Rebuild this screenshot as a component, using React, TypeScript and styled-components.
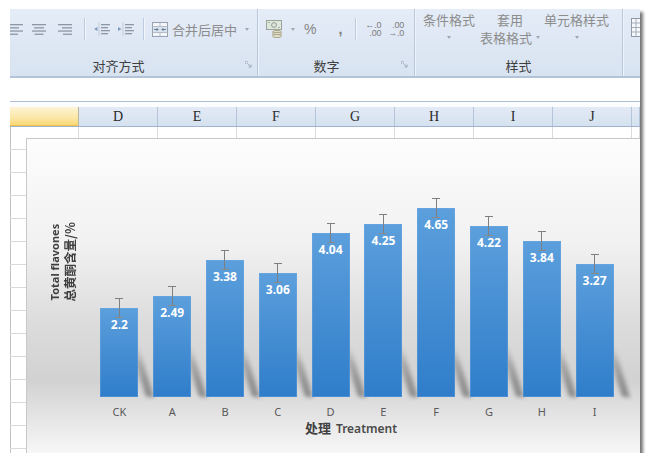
import React from 'react'
import styled, { createGlobalStyle } from 'styled-components'

const GlobalStyle = createGlobalStyle`
  html, body {
    margin: 0;
    padding: 0;
    background: #ffffff;
  }
  body {
    font-family: "Noto Sans", "Noto Sans CJK SC", sans-serif;
  }
`

const cjk = `"Noto Sans CJK SC", "Noto Sans", sans-serif`
const toolGray = '#8c8c8c'
const iconGray = '#8e97a4'

const treatments = [
  { name: 'CK', value: 2.2 },
  { name: 'A', value: 2.49 },
  { name: 'B', value: 3.38 },
  { name: 'C', value: 3.06 },
  { name: 'D', value: 4.04 },
  { name: 'E', value: 4.25 },
  { name: 'F', value: 4.65 },
  { name: 'G', value: 4.22 },
  { name: 'H', value: 3.84 },
  { name: 'I', value: 3.27 },
]

const PX_PER_UNIT = 40.6

const columns = [
  { key: 'C', width: 69, selected: true },
  { key: 'D', width: 79 },
  { key: 'E', width: 79 },
  { key: 'F', width: 79 },
  { key: 'G', width: 79 },
  { key: 'H', width: 79 },
  { key: 'I', width: 79 },
  { key: 'J', width: 79 },
  { key: 'K', width: 8, hidden: true },
]

const AlignIcon = ({ dir }: { dir: 'left' | 'center' | 'right' }) => {
  const rows = [14, 10, 14, 9]
  return (
    <svg width="14" height="13" viewBox="0 0 14 13">
      {rows.map((w, i) => {
        const x = dir === 'left' ? 0 : dir === 'right' ? 14 - w : (14 - w) / 2
        return <rect key={i} x={x} y={1 + i * 3.2} width={w} height={1.3} fill={iconGray} />
      })}
    </svg>
  )
}

const IndentIcon = ({ increase }: { increase?: boolean }) => (
  <svg width="16" height="14" viewBox="0 0 16 14">
    <line x1="5" y1="0.5" x2="5" y2="13.5" stroke="#a9b1bc" strokeWidth="1" strokeDasharray="1 1" />
    {increase ? (
      <path d="M0 5 L3.5 7 L0 9 Z" fill="#7f9bbf" />
    ) : (
      <path d="M3.5 5 L0 7 L3.5 9 Z" fill="#7f9bbf" />
    )}
    {[2, 5, 8, 11].map((y, i) => (
      <rect key={y} x="7" y={y} width={i % 2 ? 7 : 9} height="1.3" fill={iconGray} />
    ))}
  </svg>
)

const MergeIcon = () => (
  <svg width="16" height="15" viewBox="0 0 16 15">
    <rect x="0.5" y="0.5" width="15" height="14" fill="#f4f6f9" stroke="#98a2b0" />
    <line x1="0.5" y1="4.5" x2="15.5" y2="4.5" stroke="#b4bcc7" />
    <line x1="0.5" y1="10.5" x2="15.5" y2="10.5" stroke="#b4bcc7" />
    <rect x="1" y="5" width="14" height="5" fill="#dbe3ee" />
    <path d="M2 7.5 H6 M4.5 6 L6 7.5 L4.5 9" stroke="#6d7f99" fill="none" />
    <path d="M14 7.5 H10 M11.5 6 L10 7.5 L11.5 9" stroke="#6d7f99" fill="none" />
    <line x1="8" y1="1" x2="8" y2="4" stroke="#b4bcc7" />
    <line x1="8" y1="11" x2="8" y2="14" stroke="#b4bcc7" />
  </svg>
)

const AccountingIcon = () => (
  <svg width="19" height="18" viewBox="0 0 19 18">
    <rect x="0.5" y="0.5" width="15" height="9" fill="#dfe6dc" stroke="#9aa59a" />
    <circle cx="8" cy="5" r="2.4" fill="none" stroke="#8f9a8f" />
    <rect x="2" y="2" width="2" height="1" fill="#a5b0a5" />
    <rect x="12" y="7" width="2" height="1" fill="#a5b0a5" />
    <ellipse cx="11" cy="12" rx="4.5" ry="1.6" fill="#e4e0c8" stroke="#a9a48c" />
    <ellipse cx="11" cy="14" rx="4.5" ry="1.6" fill="#e4e0c8" stroke="#a9a48c" />
    <ellipse cx="11" cy="16" rx="4.5" ry="1.6" fill="#e4e0c8" stroke="#a9a48c" />
  </svg>
)

const TableIcon = () => (
  <svg width="10" height="19" viewBox="0 0 10 19">
    <rect x="0.5" y="0.5" width="12" height="18" fill="#f6f8fb" stroke="#8e98a6" />
    <line x1="0.5" y1="5" x2="10" y2="5" stroke="#a3adba" />
    <line x1="0.5" y1="9.5" x2="10" y2="9.5" stroke="#a3adba" />
    <line x1="0.5" y1="14" x2="10" y2="14" stroke="#a3adba" />
    <line x1="5" y1="0.5" x2="5" y2="18.5" stroke="#a3adba" />
  </svg>
)

const LauncherIcon = () => (
  <svg width="7" height="7" viewBox="0 0 7 7">
    <path d="M0.5 3 V0.5 H3" stroke="#b3bfce" fill="none" />
    <path d="M2 2 L6 6 M6 3.5 V6 H3.5" stroke="#9eabbd" fill="none" />
  </svg>
)

const App = () => (
  <>
    <GlobalStyle />
    <Frame>
      <Ribbon>
        <Group $w={248}>
          <ToolRow>
            <Tool $ml={-1}><AlignIcon dir="left" /></Tool>
            <Tool $ml={9}><AlignIcon dir="center" /></Tool>
            <Tool $ml={12}><AlignIcon dir="right" /></Tool>
            <ToolSep $ml={12} />
            <Tool $ml={9}><IndentIcon /></Tool>
            <Tool $ml={8}><IndentIcon increase /></Tool>
            <ToolSep $ml={9} />
            <Tool $ml={8}><MergeIcon /></Tool>
            <ToolText $ml={4}>合并后居中</ToolText>
            <Caret $ml={8} />
          </ToolRow>
          <LabelRow>
            <GroupLabel $padRight={18}>对齐方式</GroupLabel>
            <Launcher $mr={5}><LauncherIcon /></Launcher>
          </LabelRow>
        </Group>

        <Group $w={157}>
          <ToolRow>
            <Tool $ml={8}><AccountingIcon /></Tool>
            <Caret $ml={6} />
            <Percent $ml={9}>%</Percent>
            <Comma $ml={22}>,</Comma>
            <ToolSep $ml={13} />
            <Decimal $ml={9}>
              <span>←.0</span>
              <span>.00</span>
            </Decimal>
            <Decimal $ml={7}>
              <span>.00</span>
              <span>→.0</span>
            </Decimal>
          </ToolRow>
          <LabelRow>
            <GroupLabel $padRight={6}>数字</GroupLabel>
            <Launcher $mr={6}><LauncherIcon /></Launcher>
          </LabelRow>
        </Group>

        <Group $w={208}>
          <StyleRow>
            <StyleCol $ml={8}>
              <ToolLine>条件格式</ToolLine>
              <ToolLine><Caret /></ToolLine>
            </StyleCol>
            <StyleCol $ml={5}>
              <ToolLine>套用</ToolLine>
              <ToolLine>
                表格格式
                <Caret $ml={4} />
              </ToolLine>
            </StyleCol>
            <StyleCol $ml={4}>
              <ToolLine>单元格样式</ToolLine>
              <ToolLine><Caret /></ToolLine>
            </StyleCol>
          </StyleRow>
          <LabelRow>
            <GroupLabel>样式</GroupLabel>
          </LabelRow>
        </Group>

        <LastGroup>
          <Tool $ml={8}><TableIcon /></Tool>
        </LastGroup>
      </Ribbon>

      <FormulaBar />
      <HeaderGap />

      <HeaderRow>
        {columns.map(c => (
          <HeaderCell key={c.key} $w={c.width} $selected={c.selected}>
            {c.selected || c.hidden ? '' : c.key}
          </HeaderCell>
        ))}
      </HeaderRow>

      <Sheet>
        {Array.from({ length: 15 }, (_, r) => (
          <SheetRow key={r}>
            {columns.map(c => (
              <Cell key={c.key} $w={c.width} />
            ))}
          </SheetRow>
        ))}

        <Chart>
          <YTitle>
            <YTitleEn>Total flavones</YTitleEn>
            <YTitleZh>总黄酮含量/%</YTitleZh>
          </YTitle>

          <Plot>
            {treatments.map(t => (
              <Slot key={t.name}>
                <Bar style={{ height: t.value * PX_PER_UNIT }}>
                  <ErrorBar />
                  <BarValue>{t.value}</BarValue>
                </Bar>
              </Slot>
            ))}
          </Plot>

          <CategoryRow>
            {treatments.map(t => (
              <Category key={t.name}>{t.name}</Category>
            ))}
          </CategoryRow>

          <XTitle>
            <XTitleZh>处理</XTitleZh>
            <XTitleEn>Treatment</XTitleEn>
          </XTitle>
        </Chart>
      </Sheet>
    </Frame>
  </>
)

export default App

const Frame = styled.div`
  margin: 9px 0 0 10px;
  width: 630px;
  height: 444px;
  display: flex;
  flex-direction: column;
  overflow: hidden;
  background: #ffffff;
  box-shadow: 3px 3px 3px rgba(0, 0, 0, 0.55);
`

const Ribbon = styled.div`
  display: flex;
  height: 69px;
  flex-shrink: 0;
  box-sizing: border-box;
  background: linear-gradient(#e4ecf7, #d8e3f1);
  border-bottom: 2px solid #b3c3d8;
`

const Group = styled.div<{ $w: number }>`
  width: ${p => p.$w}px;
  flex-shrink: 0;
  box-sizing: border-box;
  display: flex;
  flex-direction: column;
  border-right: 1px solid #b8c8dc;
  box-shadow: 1px 0 0 #eef3fa;
`

const LastGroup = styled.div`
  flex: 1;
  display: flex;
  align-items: flex-start;
  padding-top: 9px;
`

const ToolRow = styled.div`
  height: 47px;
  box-sizing: border-box;
  padding-bottom: 7px;
  display: flex;
  align-items: center;
  white-space: nowrap;
`

const StyleRow = styled.div`
  height: 47px;
  box-sizing: border-box;
  padding-top: 1px;
  display: flex;
  align-items: flex-start;
  white-space: nowrap;
`

const StyleCol = styled.div<{ $ml: number }>`
  margin-left: ${p => p.$ml}px;
  display: flex;
  flex-direction: column;
  align-items: center;
`

const ToolLine = styled.div`
  height: 18px;
  display: flex;
  align-items: center;
  font-family: ${cjk};
  font-size: 13px;
  color: ${toolGray};
`

const Tool = styled.span<{ $ml: number }>`
  margin-left: ${p => p.$ml}px;
  display: inline-flex;
  align-items: center;
`

const ToolText = styled.span<{ $ml: number }>`
  margin-left: ${p => p.$ml}px;
  font-family: ${cjk};
  font-size: 13px;
  line-height: 15px;
  color: ${toolGray};
`

const ToolSep = styled.span<{ $ml: number }>`
  margin-left: ${p => p.$ml}px;
  width: 1px;
  height: 22px;
  background: #bccbdf;
  box-shadow: 1px 0 0 #f2f6fb;
`

const Caret = styled.span<{ $ml?: number }>`
  margin-left: ${p => p.$ml ?? 0}px;
  width: 0;
  height: 0;
  border-left: 2.5px solid transparent;
  border-right: 2.5px solid transparent;
  border-top: 3px solid #a2a8b1;
`

const Percent = styled.span<{ $ml: number }>`
  margin-left: ${p => p.$ml}px;
  font-family: "Liberation Sans", sans-serif;
  font-size: 14px;
  color: #868686;
`

const Comma = styled.span<{ $ml: number }>`
  margin-left: ${p => p.$ml}px;
  font-family: "Liberation Sans", sans-serif;
  font-weight: bold;
  font-size: 14px;
  line-height: 10px;
  color: #7c7c7c;
`

const Decimal = styled.span<{ $ml: number }>`
  margin-left: ${p => p.$ml}px;
  display: inline-flex;
  flex-direction: column;
  align-items: flex-end;
  font-family: "Liberation Sans", sans-serif;
  font-size: 9px;
  line-height: 8px;
  color: #7d7d7d;
  letter-spacing: -0.2px;
`

const LabelRow = styled.div`
  height: 20px;
  display: flex;
  align-items: center;
`

const GroupLabel = styled.div<{ $padRight?: number }>`
  flex: 1;
  text-align: center;
  padding-right: ${p => p.$padRight ?? 0}px;
  font-family: ${cjk};
  font-size: 13px;
  line-height: 20px;
  color: #3f3f3f;
`

const Launcher = styled.span<{ $mr: number }>`
  margin-right: ${p => p.$mr}px;
  display: inline-flex;
  margin-top: -3px;
`

const FormulaBar = styled.div`
  height: 24px;
  flex-shrink: 0;
  box-sizing: border-box;
  background: #ffffff;
  border-bottom: 1px solid #aebdd0;
`

const HeaderGap = styled.div`
  height: 5px;
  flex-shrink: 0;
  background: #fbfcfd;
`

const HeaderRow = styled.div`
  display: flex;
  height: 20px;
  flex-shrink: 0;
  box-sizing: border-box;
  border-bottom: 1px solid #9fb4cc;
`

const HeaderCell = styled.div<{ $w: number; $selected?: boolean }>`
  width: ${p => p.$w}px;
  flex-shrink: 0;
  box-sizing: border-box;
  border-right: 1px solid ${p => (p.$selected ? '#b7b7a0' : '#b4c5da')};
  background: ${p =>
    p.$selected
      ? 'linear-gradient(#fdf4d6 0%, #fbe7a8 55%, #f8d66f 100%)'
      : 'linear-gradient(#e2eaf5, #d6e2f0)'};
  box-shadow: ${p => (p.$selected ? 'inset 0 -1px 0 #f1c14a' : 'none')};
  display: flex;
  align-items: center;
  justify-content: center;
  font-family: "Liberation Serif", serif;
  font-size: 14px;
  color: #2a2a2a;
`

const Sheet = styled.div`
  flex: 1;
  position: relative;
  overflow: hidden;
  box-shadow: inset 1px 0 0 #c3c3c3;
`

const SheetRow = styled.div`
  display: flex;
  height: 23px;
`

const Cell = styled.div<{ $w: number }>`
  width: ${p => p.$w}px;
  flex-shrink: 0;
  box-sizing: border-box;
  border-right: 1px solid #dadada;
  border-bottom: 1px solid #dadada;
`

const Chart = styled.div`
  position: absolute;
  left: 16px;
  top: 11px;
  width: 620px;
  height: 320px;
  box-sizing: border-box;
  border: 1px solid #c8c8c8;
  background: linear-gradient(
    180deg,
    #fdfdfd 0%,
    #f1f1f1 33%,
    #dcdcdc 58%,
    #d2d2d2 76%,
    #e2e2e2 86%,
    #f9f9f9 100%
  );
  display: grid;
  grid-template-columns: 66px 528px;
  grid-template-rows: 28px 230px 23px auto;
`

const YTitle = styled.div`
  grid-column: 1;
  grid-row: 2;
  justify-self: start;
  align-self: start;
  margin-left: 20px;
  margin-top: 55px;
  writing-mode: vertical-rl;
  text-orientation: sideways;
  transform: rotate(180deg);
  text-align: center;
  color: #404040;
  font-weight: bold;
`

const YTitleEn = styled.div`
  font-family: "Noto Sans", sans-serif;
  font-size: 11px;
  line-height: 15px;
`

const YTitleZh = styled.div`
  font-family: ${cjk};
  font-size: 12.5px;
  line-height: 15px;
`

const Plot = styled.div`
  grid-column: 2;
  grid-row: 2;
  display: flex;
  align-items: flex-end;
  isolation: isolate;
`

const Slot = styled.div`
  flex: 1 1 0;
  display: flex;
  justify-content: center;
  align-items: flex-end;
  height: 100%;
`

const Bar = styled.div`
  position: relative;
  width: 38px;
  background: linear-gradient(#5c9fdc, #2f7dca);
  box-shadow: inset 0 0 0 1px rgba(120, 175, 230, 0.35);
  text-align: center;

  &::before {
    content: '';
    position: absolute;
    left: calc(100% + 8px);
    bottom: 0;
    width: 8px;
    height: 52px;
    background: linear-gradient(
      to top,
      rgba(0, 0, 0, 0.36),
      rgba(0, 0, 0, 0.22) 60%,
      rgba(0, 0, 0, 0)
    );
    transform: skewX(17deg);
    transform-origin: bottom center;
    filter: blur(2px);
    z-index: -1;
  }
`

const ErrorBar = styled.span`
  position: absolute;
  top: -10px;
  left: calc(50% - 4px);
  width: 8px;
  height: 20px;
  box-sizing: border-box;
  border-top: 1px solid #7f7f7f;
  border-bottom: 1px solid #8a8a8a;

  &::before {
    content: '';
    position: absolute;
    left: 3.5px;
    top: 0;
    bottom: 0;
    width: 1px;
    background: #7f7f7f;
  }
`

const BarValue = styled.div`
  padding-top: 9px;
  font-family: "Noto Sans", sans-serif;
  font-weight: bold;
  font-size: 12px;
  line-height: 16px;
  color: #ffffff;
`

const CategoryRow = styled.div`
  grid-column: 2;
  grid-row: 3;
  display: flex;
  padding-top: 7px;
`

const Category = styled.div`
  flex: 1 1 0;
  text-align: center;
  font-family: "Noto Sans", sans-serif;
  font-size: 11px;
  line-height: 16px;
  color: #595959;
`

const XTitle = styled.div`
  grid-column: 2;
  grid-row: 4;
  display: flex;
  justify-content: center;
  align-items: baseline;
  gap: 5px;
  padding-right: 12px;
  line-height: 16px;
  color: #404040;
`

const XTitleZh = styled.span`
  font-family: ${cjk};
  font-weight: bold;
  font-size: 13px;
`

const XTitleEn = styled.span`
  font-family: "Noto Sans", sans-serif;
  font-weight: 600;
  font-size: 12px;
  color: #4a4a4a;
`
